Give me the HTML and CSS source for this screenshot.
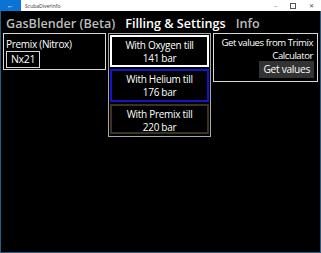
FILE: index.html
```html
<!DOCTYPE html>
<html lang="en">

<head>
    <meta charset="UTF-8">
    <meta name="viewport" content="width=device-width, initial-scale=1.0">
    <title>ScubaDiverInfo</title>
    <link rel="stylesheet" href="styles.css">
</head>

<body>
    <div class="window">
        <div class="titlebar">
            <div class="back">&#8592;</div>
            <span class="app-name">ScubaDiverInfo</span>
            <div class="controls">
                <span>&#8211;</span>
                <span class="max"></span>
                <span>&#10005;</span>
            </div>
        </div>
        <div class="content">
            <nav class="pivot">
                <span>GasBlender (Beta)</span>
                <span class="active">Filling &amp; Settings</span>
                <span>Info</span>
            </nav>
            <div class="panels">
                <section class="panel premix">
                    <p>Premix (Nitrox)</p>
                    <div class="mix">Nx21</div>
                </section>
                <section class="panel fills">
                    <div class="fill oxygen">With Oxygen till<br>141 bar</div>
                    <div class="fill helium">With Helium till<br>176 bar</div>
                    <div class="fill mixed">With Premix till<br>220 bar</div>
                </section>
                <section class="panel trimix">
                    <p>Get values from Trimix<br>Calculator</p>
                    <button>Get values</button>
                </section>
            </div>
        </div>
    </div>
</body>

</html>
```

FILE: styles.css
```css
html, body {
    margin: 0;
    padding: 0;
}

body {
    font-family: "Open Sans", "Noto Sans", sans-serif;
}

.window {
    width: 321px;
    height: 253px;
    box-sizing: border-box;
    border: 1px solid #2c5b84;
    border-top: none;
    background: #000;
    display: flex;
    flex-direction: column;
}

.titlebar {
    height: 11px;
    background: #fff;
    display: flex;
    align-items: center;
    margin: 0 -1px;
}

.back {
    width: 21px;
    height: 11px;
    background: #0a74d6;
    color: #fff;
    font-size: 7px;
    line-height: 11px;
    text-align: center;
}

.app-name {
    font-size: 5px;
    color: #333;
    margin-left: 4px;
    flex: 1;
}

.controls {
    display: flex;
    align-items: center;
    gap: 13px;
    padding-right: 7px;
    font-size: 6px;
    color: #444;
}

.controls .max {
    width: 4px;
    height: 4px;
    border: 1px solid #555;
}

.content {
    flex: 1;
    padding: 0 2px;
}

.pivot {
    display: flex;
    gap: 10px;
    padding: 4px 0 0 3px;
    height: 18px;
    font-size: 12.6px;
    font-weight: 600;
    color: #bcbcbc;
    white-space: nowrap;
}

.pivot .active {
    color: #fff;
}

.panels {
    display: flex;
    align-items: flex-start;
    gap: 2px;
}

.panel {
    border: 1px solid #d8d8d8;
    box-sizing: border-box;
    color: #fff;
    font-size: 10px;
    letter-spacing: -0.3px;
}

.panel p {
    margin: 0;
}

.premix {
    width: 104px;
    height: 37px;
    padding: 3px 2px;
}

.mix {
    display: inline-block;
    margin: 0;
    border: 1px solid #d8d8d8;
    padding: 0 4px;
    line-height: 15px;
    font-size: 10.5px;
}

.fills {
    width: 103px;
    border-color: #a8a8a8;
    padding: 1px 1px 2px;
    display: flex;
    flex-direction: column;
    gap: 2px;
}

.fill {
    height: 32px;
    box-sizing: border-box;
    border: 2px solid #fff;
    text-align: center;
    line-height: 13px;
    padding: 2px 0 1px;
}

.helium {
    height: 33px;
    border-color: #1414c8;
}

.mixed {
    height: 30px;
    border-color: #3a3222;
}

.trimix {
    width: 106px;
    height: 49px;
    text-align: right;
    padding: 2px 4px 0 0;
    line-height: 13px;
    white-space: nowrap;
    font-size: 9.6px;
    letter-spacing: -0.45px;
}

.trimix button {
    margin: -1px -1px 0 0;
    background: #333;
    color: #fff;
    border: none;
    font-family: inherit;
    font-size: 10.2px;
    letter-spacing: -0.3px;
    padding: 1px 4px 2px;
}
```
